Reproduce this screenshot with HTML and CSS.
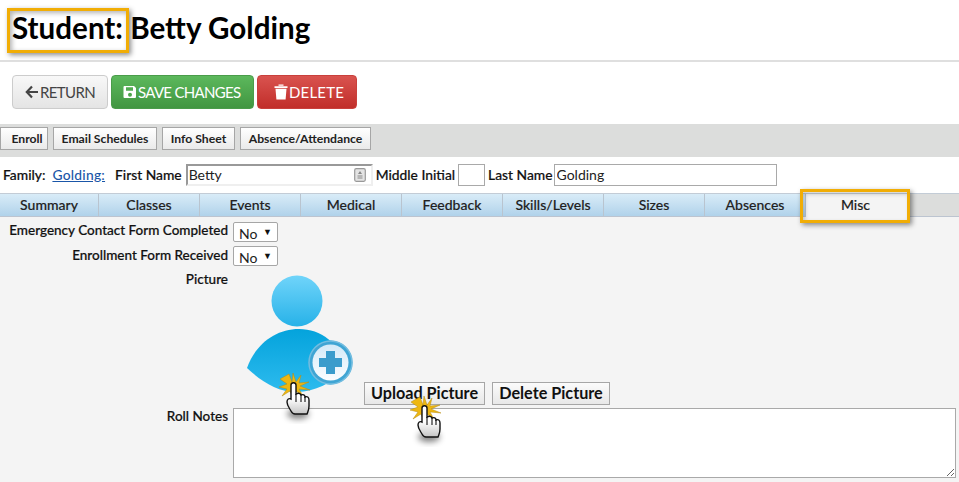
FILE: index.html
```html
<!DOCTYPE html>
<html lang="en">
<head>
<meta charset="utf-8">
<title>Student: Betty Golding</title>
<link rel="stylesheet" href="styles.css">
</head>
<body>
<header class="title-bar"><h1>Student: Betty Golding</h1></header>
<div class="actions">
  <button class="btn btn-return"><svg class="ico" viewBox="0 0 14 14"><path d="M7 1.500 1.800 7 7 12.500M2.200 7H13" fill="none" stroke="#444" stroke-width="2.200"/></svg>RETURN</button>
  <button class="btn btn-save"><svg class="ico" viewBox="0 0 14 14"><path fill-rule="evenodd" d="M1.500 1h9.500L13 3v9a1 1 0 0 1-1 1H1.500a1 1 0 0 1-1-1V2a1 1 0 0 1 1-1ZM3 2.200v3.600h7V2.200ZM7 7.800a2 2 0 1 0 0 4 2 2 0 0 0 0-4Z" fill="#fff"/></svg>SAVE CHANGES</button>
  <button class="btn btn-delete"><svg class="ico ico-trash" viewBox="0 0 14 16"><path d="M.5 2.200h13V4H.5ZM4.500.6h5v1.200h-5ZM1.500 4.800h11l-.9 10.700H2.400Z" fill="#fff"/></svg>DELETE</button>
</div>
<nav class="toolbar">
  <button class="tool tool-enroll">Enroll</button>
  <button class="tool tool-email">Email Schedules</button>
  <button class="tool tool-info">Info Sheet</button>
  <button class="tool tool-absence">Absence/Attendance</button>
</nav>
<div class="family-row">
  <span class="lbl">Family:</span>
  <a class="family-link" href="#">Golding:</a>
  <span class="lbl first-lbl">First Name</span>
  <span class="first-wrap"><input class="field field-first" value="Betty"><svg class="contact-ico" viewBox="0 0 12 14"><rect x=".7" y=".7" width="10.600" height="12.600" rx="1.500" fill="#e4e4e4" stroke="#999" stroke-width="1.200"/><path d="M6 3 8 6H4ZM3.500 7.500h5v1h-5ZM3.500 9.500h5v1h-5Z" fill="#888"/></svg></span>
  <span class="lbl">Middle Initial</span>
  <input class="field field-mi">
  <span class="lbl">Last Name</span>
  <input class="field field-last" value="Golding">
</div>
<div class="tabs">
  <a class="tab">Summary</a><a class="tab">Classes</a><a class="tab">Events</a><a class="tab">Medical</a><a class="tab">Feedback</a><a class="tab">Skills/Levels</a><a class="tab">Sizes</a><a class="tab">Absences</a><a class="tab tab-active">Misc</a>
</div>
<main class="panel">
  <div class="form-row">
    <label class="form-lbl">Emergency Contact Form Completed</label>
    <span class="sel">No<i class="caret">▼</i></span>
  </div>
  <div class="form-row row-2">
    <label class="form-lbl">Enrollment Form Received</label>
    <span class="sel">No<i class="caret">▼</i></span>
  </div>
  <div class="form-row row-pic">
    <label class="form-lbl">Picture</label>
    <div class="pic-area">
      <svg class="avatar" viewBox="0 0 120 125">
        <defs>
          <linearGradient id="head" x1="0" y1="0" x2="0" y2="1"><stop offset="0" stop-color="#70d4fa"/><stop offset="1" stop-color="#27b2e8"/></linearGradient>
          <linearGradient id="torso" x1="0" y1="0" x2="0" y2="1"><stop offset="0" stop-color="#04a3dc"/><stop offset="1" stop-color="#2dbbee"/></linearGradient>
          <linearGradient id="plusbg" x1="0" y1="0" x2="0" y2="1"><stop offset="0" stop-color="#d4eaf8"/><stop offset="1" stop-color="#fafdff"/></linearGradient>
        </defs>
        <circle cx="50" cy="26" r="25.500" fill="url(#head)"/>
        <path d="M0 93C8 70 28 54 52 54 74 54 92 68 101 93 84 108 68 117 50 117 30 117 14 106 0 93Z" fill="url(#torso)"/>
        <circle cx="83.500" cy="87.500" r="22" fill="#3fa5d4"/>
        <circle cx="83.500" cy="87.500" r="21.500" fill="none" stroke="#72bde0" stroke-width="1.500"/>
        <circle cx="83.500" cy="87.500" r="18" fill="url(#plusbg)"/>
        <path d="M79 76h9v7h7v9h-7v7h-9v-7h-7v-9h7Z" fill="#3a9ccc"/>
      </svg>
      <div class="pic-buttons">
        <button class="pic-btn pic-upload">Upload Picture</button>
        <button class="pic-btn pic-delete">Delete Picture</button>
      </div>
    </div>
  </div>
  <div class="form-row row-notes">
    <label class="form-lbl">Roll Notes</label>
    <textarea class="notes"></textarea>
  </div>
</main>

<div class="callout callout-title"></div>
<div class="callout callout-tab"></div>

<svg class="cursor cursor-a" viewBox="0 0 40 50">
  <defs>
    <linearGradient id="handfill" x1="0" y1="0" x2="0" y2="1"><stop offset=".5" stop-color="#fff"/><stop offset="1" stop-color="#c4c4c4"/></linearGradient>
    <filter id="soft" x="-50%" y="-50%" width="200%" height="200%"><feGaussianBlur stdDeviation="3"/></filter>
    <g id="hand">
      <path d="M13 3 16 11 17 2 20 11 25 4 23 12 33 11 24 15 34 19 23 18 27 25 20 20 17 27 14 20 6 25 11 18 3 16 11 13 4 8Z" fill="#eeb711" stroke="#b58a10" stroke-width=".5"/>
      <ellipse cx="22" cy="43" rx="11" ry="5" fill="#000" opacity=".5" filter="url(#soft)"/>
      <path d="M15 40C12 35 11 34 11 31 11 28 13 27 15 28V14C15 11 20 11 20 14V23C22 22 24 22 25 24 27 23 29 24 29 26 31 25 33 26 33 29V35C33 39 32 40 31 43H19C17 43 16 42 15 40Z" fill="url(#handfill)" stroke="#111" stroke-width="1.400"/>
      <path d="M20 23V31M25 24V31M29 26V31" stroke="#111" stroke-width="1.100"/>
    </g>
  </defs>
  <use href="#hand"/>
</svg>
<svg class="cursor cursor-b" viewBox="0 0 40 50">
  <use href="#hand"/>
</svg>
</body>
</html>
```
FILE: styles.css
```css
* { box-sizing: border-box; }
html, body { margin: 0; padding: 0; }
body {
  position: relative;
  width: 959px;
  height: 482px;
  overflow: hidden;
  background: #f4f4f4;
  font-family: Lato, "Liberation Sans", sans-serif;
  color: #111;
}
.title-bar {
  height: 62px;
  background: #fff;
  border-bottom: 2px solid #dfdfdf;
  padding: 8px 0 0 12px;
}
h1 {
  margin: 0;
  font-size: 29.600px;
  line-height: 40px;
  font-weight: 700;
  color: #000;
  white-space: nowrap;
}
.actions {
  height: 62px;
  background: #fff;
  display: flex;
  gap: 3px;
  padding: 13px 0 0 12px;
}
.btn {
  height: 34px;
  border-radius: 4px;
  font: 400 15px/1 Lato, "Liberation Sans", sans-serif;
  display: flex;
  align-items: center;
  gap: 1px;
  padding: 0;
}
.ico { width: 14px; height: 14px; flex: none; }
.ico-trash { height: 16px; }
.btn-return {
  width: 96px;
  padding-left: 12px;
  border: 1px solid #ccc;
  color: #444;
  background: linear-gradient(#f8f8f8, #e4e4e4);
  letter-spacing: -.6px;
}
.btn-save {
  width: 143px;
  padding-left: 11px;
  border: 1px solid #4a9c4a;
  color: #fff;
  background: linear-gradient(#5cb85c, #419641);
  letter-spacing: -.7px;
}
.btn-delete {
  width: 100px;
  padding-left: 16px;
  border: 1px solid #c9403c;
  color: #fff;
  background: linear-gradient(#d9534f, #c12e2a);
  letter-spacing: .2px;
}
.toolbar {
  height: 33px;
  background: #dcdddc;
  display: flex;
  gap: 5px;
  padding-top: 3px;
  align-items: flex-start;
}
.tool {
  height: 23px;
  padding: 2px 0 0;
  border: 1px solid #a6a6a6;
  background: linear-gradient(#fff, #eaeaea);
  font: 700 12.2px/1 Lato, "Liberation Sans", sans-serif;
  color: #222;
  text-align: center;
}
.tool-enroll { width: 48px; padding-left: 6px; }
.tool-email { width: 104px; }
.tool-info { width: 73px; }
.tool-absence { width: 131px; }
.family-row {
  height: 36px;
  background: #fff;
  display: flex;
  align-items: center;
  padding: 0 0 0 3px;
  font-size: 13.800px;
}
.lbl { font-weight: 500; color: #111; white-space: nowrap; -webkit-text-stroke: .2px #111; position: relative; top: -1px; }
.family-link { color: #1a56a8; text-decoration: underline; margin-left: 7px; font-weight: 500; position: relative; top: -1px; letter-spacing: .25px; }
.first-lbl { margin-left: 10px; margin-right: 4px; }
.first-wrap { position: relative; display: block; width: 187px; height: 22px; margin-right: 3px; }
.field {
  height: 22px;
  border: 1px solid #a9a9a9;
  background: #fff;
  padding: 0 2px 2px;
  font: 400 14px Lato, "Liberation Sans", sans-serif;
  color: #222;
  outline: none;
  border-radius: 0;
}
.field-first {
  width: 187px;
  border: 2px solid #efefef;
  border-top-color: #999;
  border-left-color: #999;
  padding: 0 0 2px 1px;
}
.contact-ico { position: absolute; right: 7px; top: 4px; width: 12px; height: 14px; }
.field-mi { width: 27px; margin: 0 3px 0 3px; }
.field-last { width: 223px; margin-left: 1px; }
.tabs {
  height: 24px;
  background: #dcdddc;
  display: flex;
  border-bottom: 1px solid #bcc4d0;
  border-top: 1px solid #c3ccd6;
}
.tab {
  width: 101px;
  flex: none;
  background: linear-gradient(#d9ecf8, #b0d2ea);
  border-right: 1px solid #b9c4cf;
  text-align: center;
  font-size: 14px;
  font-weight: 500;
  line-height: 22px;
  color: #222;
  -webkit-text-stroke: .15px #222;
}
.tab:first-child { width: 99px; }
.tab-active {
  width: 102px;
  background: #f4f4f4;
  height: 23px;
  padding-right: 2px;
}
.panel { padding: 0; position: relative; }
.form-row { display: flex; align-items: flex-start; padding-top: 5px; }
.form-lbl {
  width: 228px;
  flex: none;
  text-align: right;
  font-size: 13.500px;
  font-weight: 500;
  color: #111;
  line-height: 17px;
  white-space: nowrap;
  -webkit-text-stroke: .2px #111;
}
.row-2 { padding-top: 4px; }
.row-2 .form-lbl { margin-top: 1px; }
.row-pic { height: 142px; }
.sel {
  position: relative;
  display: block;
  margin-left: 5px;
  width: 45px;
  height: 20px;
  border: 1px solid #a6a6a6;
  border-radius: 2px;
  background: #fff;
  font-size: 14px;
  line-height: 21px;
  padding-left: 5px;
  color: #222;
}
.caret {
  position: absolute;
  right: 5px;
  top: 0;
  font-style: normal;
  font-size: 9px;
  line-height: 18px;
  color: #111;
}
.pic-area { position: relative; flex: 1; display: flex; }
.avatar {
  display: block;
  width: 120px;
  height: 125px;
  margin: 4px 0 0 19px;
  flex: none;
}
.pic-buttons {
  display: flex;
  gap: 7px;
  margin: 111px 0 0 -3px;
  height: 23px;
}
.pic-btn {
  height: 23px;
  padding: 0;
  border: 1px solid #a6a6a6;
  background: linear-gradient(#fbfbfb, #e8e8e8);
  font: 700 16.200px/1 Lato, "Liberation Sans", sans-serif;
  color: #111;
  white-space: nowrap;
}
.pic-upload { width: 121px; }
.pic-delete { width: 118px; }
.row-notes { padding-top: 0; }
.notes {
  display: block;
  margin: 0 0 0 5px;
  width: 723px;
  height: 70px;
  border: 1px solid #a9a9a9;
  background: #fff;
  border-radius: 0;
}
.callout {
  position: absolute;
  border: 3px solid #f1ad05;
  box-shadow: 2px 2px 5px rgba(0,0,0,.45), inset 2px 2px 5px rgba(0,0,0,.3);
  pointer-events: none;
}
.callout-title { left: 7px; top: 8px; width: 122px; height: 45px; }
.callout-tab { left: 800px; top: 189px; width: 110px; height: 34px; box-shadow: 2px 2px 5px rgba(0,0,0,.45), inset 2px 2px 4px rgba(0,0,0,.2); }
.cursor { position: absolute; width: 40px; height: 50px; pointer-events: none; overflow: visible; }
.cursor-a { left: 276px; top: 371px; }
.cursor-b { left: 407px; top: 394px; }
```
